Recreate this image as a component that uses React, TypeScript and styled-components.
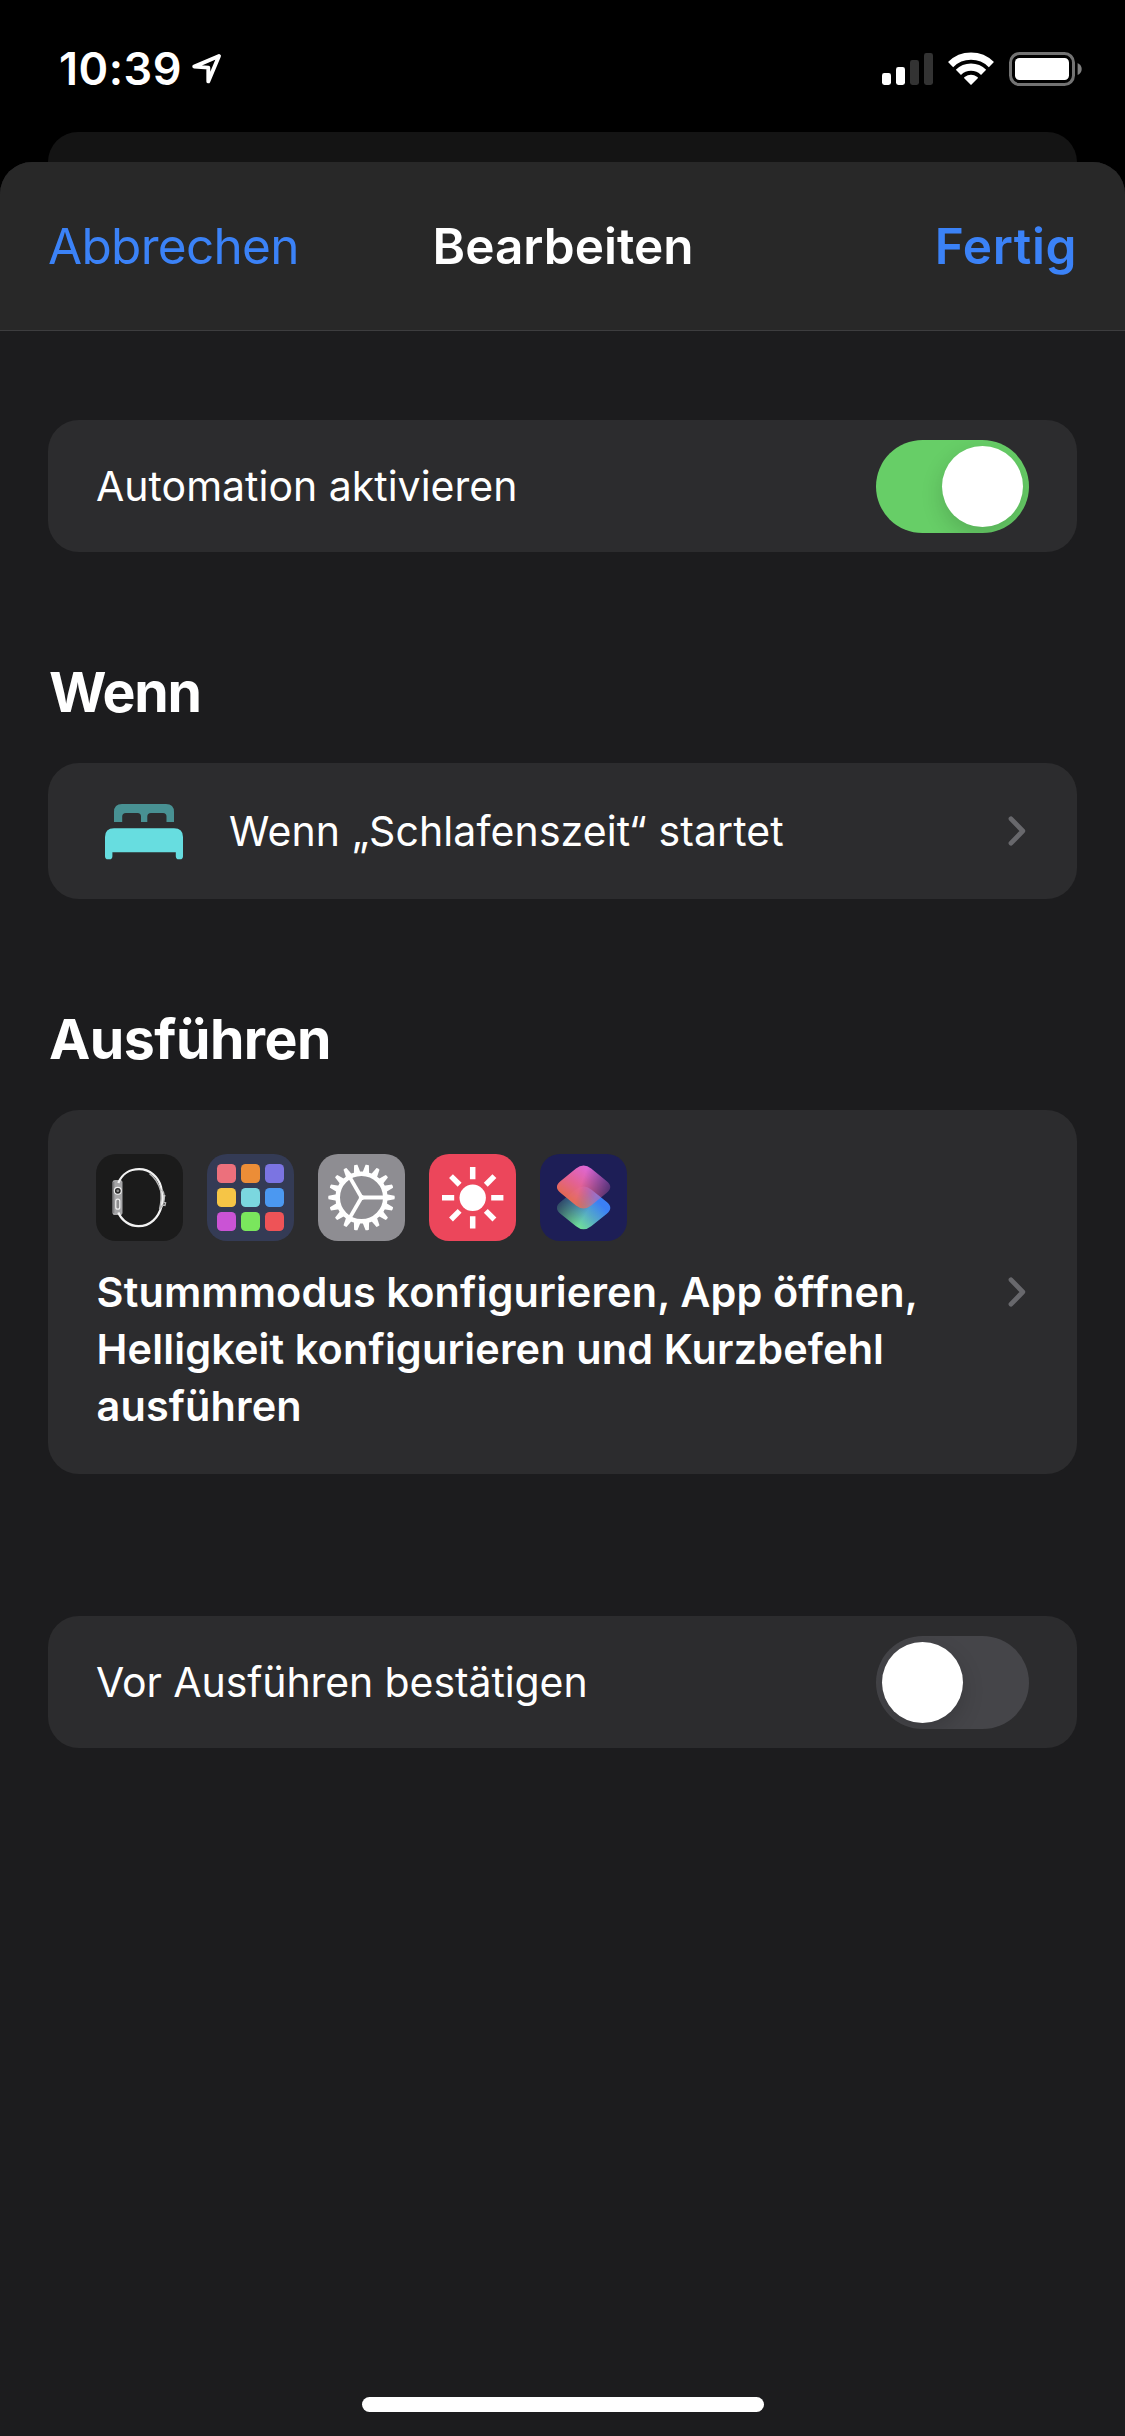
import React, { useState } from 'react';
import styled, { createGlobalStyle } from 'styled-components';

const GlobalStyle = createGlobalStyle`
  *, *::before, *::after { box-sizing: border-box; }
  body {
    margin: 0;
    background: #000;
    color: #fff;
    font-family: Inter, "Liberation Sans", sans-serif;
  }
  button {
    border: 0;
    padding: 0;
    background: none;
    color: inherit;
    font: inherit;
  }
  svg { display: block; flex: none; }
`;

const Screen = styled.div`
  width: 1125px;
  height: 2436px;
  display: flex;
  flex-direction: column;
  background: #000;
  overflow: hidden;
`;

const StatusBar = styled.div`
  height: 132px;
  flex: none;
  padding: 6px 43px 0 59px;
  display: flex;
  align-items: center;
  justify-content: space-between;
`;

const TimeGroup = styled.div`
  display: flex;
  align-items: center;
  gap: 9px;
`;

const Time = styled.span`
  font-size: 45px;
  font-weight: 600;
  line-height: 54px;
  letter-spacing: 0.5px;
`;

const StatusIcons = styled.div`
  display: flex;
  align-items: center;
  gap: 15px;
`;

const BackCard = styled.div`
  height: 30px;
  flex: none;
  margin: 0 48px;
  border-radius: 30px 30px 0 0;
  background: #141414;
`;

const Sheet = styled.main`
  flex: 1;
  display: flex;
  flex-direction: column;
  border-radius: 32px 32px 0 0;
  background: #1c1c1e;
  overflow: hidden;
`;

const NavBar = styled.header`
  height: 169px;
  flex: none;
  padding: 0 48px 0 48px;
  display: grid;
  grid-template-columns: 1fr auto 1fr;
  align-items: center;
  background: #282828;
  border-bottom: 1px solid #3d3d3f;
  font-size: 49.5px;
  line-height: 60px;
`;

const NavButton = styled.button<{ $strong?: boolean }>`
  justify-self: ${(p) => (p.$strong ? 'end' : 'start')};
  color: #3b82f7;
  font-weight: ${(p) => (p.$strong ? 600 : 400)};
  letter-spacing: ${(p) => (p.$strong ? '0.6px' : '-0.7px')};
`;

const NavTitle = styled.h1`
  margin: 0;
  padding-left: 1px;
  font-size: inherit;
  font-weight: 600;
`;

const Content = styled.div`
  flex: 1;
  display: flex;
  flex-direction: column;
  padding: 89px 48px 0;
`;

const Section = styled.section<{ $gap?: number }>`
  display: flex;
  flex-direction: column;
  margin-top: ${(p) => p.$gap ?? 0}px;
`;

const SectionTitle = styled.h2<{ $spacing?: number }>`
  margin: 0 0 41px 1px;
  font-size: 55.4px;
  font-weight: 700;
  line-height: 60px;
  letter-spacing: ${(p) => p.$spacing ?? 0}px;
`;

const Card = styled.div<{ $height: number }>`
  height: ${(p) => p.$height}px;
  padding: 0 48px;
  display: flex;
  align-items: center;
  border-radius: 31px;
  background: #2c2c2e;
`;

const CardLabel = styled.span<{ $spacing?: number }>`
  flex: 1;
  font-size: 41px;
  line-height: 57px;
  letter-spacing: ${(p) => p.$spacing ?? 0}px;
`;

const TriggerIcon = styled.div`
  width: 133px;
  padding: 2px 0 0 9px;
`;

const ActionsCard = styled.div`
  height: 364px;
  padding: 44px 48px 0;
  display: flex;
  flex-direction: column;
  gap: 23px;
  border-radius: 31px;
  background: #2c2c2e;
`;

const AppIcons = styled.div`
  display: flex;
  gap: 24px;
`;

const AppIcon = styled.div<{ $bg: string }>`
  width: 87px;
  height: 87px;
  border-radius: 20px;
  background: ${(p) => p.$bg};
  overflow: hidden;
`;

const SummaryRow = styled.div`
  display: flex;
  align-items: flex-start;
  justify-content: space-between;
`;

const Summary = styled.p`
  width: 860px;
  margin: 0;
  padding-left: 0.6px;
  font-size: 41.4px;
  font-weight: 600;
  line-height: 57px;
  letter-spacing: 0.14px;
`;

const ChevronSlot = styled.span<{ $height: number }>`
  height: ${(p) => p.$height}px;
  display: flex;
  align-items: center;
  margin-right: 3px;
`;

const Track = styled.button<{ $on: boolean }>`
  width: 153px;
  height: 93px;
  padding: 6px;
  display: flex;
  justify-content: ${(p) => (p.$on ? 'flex-end' : 'flex-start')};
  border-radius: 47px;
  background: ${(p) => (p.$on ? '#67ce67' : '#454549')};
  overflow: hidden;
`;

const Knob = styled.span`
  width: 81px;
  height: 81px;
  border-radius: 50%;
  background: #fff;
  box-shadow: 0 8px 22px rgba(0, 0, 0, 0.16);
`;

const HomeIndicator = styled.div`
  width: 402px;
  height: 15px;
  flex: none;
  margin: 0 auto 24px 362px;
  border-radius: 8px;
  background: #fff;
`;

function Toggle({ initial, label }: { initial: boolean; label: string }) {
  const [on, setOn] = useState(initial);
  return (
    <Track $on={on} role="switch" aria-checked={on} aria-label={label} onClick={() => setOn(!on)}>
      <Knob />
    </Track>
  );
}

const LocationArrow = () => (
  <svg width="32" height="34" viewBox="191 52 32 34" fill="none" stroke="#fff" strokeWidth="3.9" strokeLinejoin="round">
    <path d="M219 56 L194.2 66.6 L208.3 67.6 L208.3 81.4 Z" />
  </svg>
);

const Signal = () => (
  <svg width="51" height="34" viewBox="0 0 51 34" fill="#fff">
    <rect x="0" y="21" width="9" height="12" rx="2.4" />
    <rect x="14" y="15" width="9" height="18" rx="2.4" />
    <rect x="28" y="8" width="9" height="25" rx="2.4" fill="#333" />
    <rect x="42" y="1" width="9" height="32" rx="2.4" fill="#333" />
  </svg>
);

const Wifi = () => (
  <svg width="46" height="34" viewBox="0 0 46 34">
    <g fill="none" stroke="#fff" strokeWidth="7.3">
      <path d="M2.6 12.6 A29 29 0 0 1 43.4 12.6" />
      <path d="M10.4 20.4 A17.9 17.9 0 0 1 35.6 20.4" />
    </g>
    <path d="M23 33 L16 26 Q16 25.4 16.6 25 Q23 20.6 29.4 25 Q30 25.4 30 26 Z" fill="#fff" />
  </svg>
);

const Battery = () => (
  <svg width="73" height="34" viewBox="0 0 73 34">
    <rect x="1.5" y="1.5" width="63" height="31" rx="9" fill="none" stroke="#737373" strokeWidth="3" />
    <rect x="6" y="6" width="54" height="22" rx="4.5" fill="#fff" />
    <path d="M68.6 11 Q72.7 13 72.7 17 Q72.7 21 68.6 23 Z" fill="#808080" />
  </svg>
);

const Chevron = () => (
  <svg width="18" height="30" viewBox="0 0 18 30" fill="none" stroke="#68686c" strokeWidth="4.8" strokeLinecap="round" strokeLinejoin="round">
    <path d="M3 2.8 L14.8 15 L3 27.2" />
  </svg>
);

const BedIcon = () => (
  <svg width="78" height="56" viewBox="0 0 78 56">
    <path
      fill="#489193"
      d="M9 18 V8 Q9 0 17 0 H61 Q69 0 69 8 V18 H61.5 V12.5 Q61.5 9 58 9 H46 Q42.3 9 42.3 12.5 V18 H36 V12.5 Q36 9 32.5 9 H21 Q17.2 9 17.2 12.5 V18 Z"
    />
    <path
      fill="#67dde0"
      d="M0 33 Q0 24.2 9 24.2 H69 Q78 24.2 78 33 V52.2 Q78 55.3 75 55.3 H73.8 Q70.8 55.3 70.8 52.2 V48.2 H7.4 V52.2 Q7.4 55.3 4.4 55.3 H3 Q0 55.3 0 52.2 Z"
    />
  </svg>
);

const WatchIcon = () => (
  <svg width="87" height="87" viewBox="0 0 87 87" fill="none">
    <rect x="16.5" y="26" width="10" height="35" rx="2.6" fill="#a5a5a7" />
    <path d="M17.6 28 V59" stroke="#828284" strokeWidth="1.6" />
    <path d="M22.3 29 C26 20 34 15.2 43 15.2 C54 15.2 62.5 23 65 33 C66.6 40 67 47 65.2 53" stroke="#f2f2f2" strokeWidth="2.3" />
    <path d="M22.3 58.5 C26 67 34 72.2 42.5 72.2 C54 72.2 62.5 64 65.6 52 L68.4 41" stroke="#f2f2f2" strokeWidth="2.3" />
    <path d="M53.5 19.6 C58.5 23.2 62.6 29.5 64.8 37" stroke="#b8b8b8" strokeWidth="1.3" />
    <path d="M65.8 35.5 C68.3 38.5 68.6 44 67.8 48.5 L69.6 48.8 L69 51.4 L66.8 51 L63.5 55 C65 49 65.6 42 64.4 35" stroke="#b8b8b8" strokeWidth="1.3" />
    <circle cx="21.8" cy="36.8" r="4" fill="#f0f0f0" />
    <circle cx="21.8" cy="36.8" r="2.9" fill="#2a2a2a" />
    <circle cx="21.8" cy="36.8" r="1.4" fill="#8d8d8d" />
    <rect x="19.8" y="45.2" width="4" height="10" rx="2" fill="#8d8d8f" stroke="#f0f0f0" strokeWidth="1.2" />
  </svg>
);

const TILE_COLORS = ['#ec707c', '#ec8d37', '#7b74e2', '#f6c546', '#7bd7df', '#4b98f1', '#ca53d5', '#7ae65d', '#ee5357'];

const TileGrid = styled.div`
  width: 87px;
  height: 87px;
  display: grid;
  grid-template-columns: repeat(3, 18.4px);
  grid-auto-rows: 18.4px;
  gap: 5.7px;
  place-content: center;
`;

const Tile = styled.span<{ $color: string }>`
  border-radius: 4.6px;
  background: ${(p) => p.$color};
`;

const GearIcon = () => (
  <svg width="87" height="87" viewBox="-43.5 -43.5 87 87" fill="#fff">
    <circle r="23.8" fill="none" stroke="#fff" strokeWidth="4.6" />
    {Array.from({ length: 18 }, (_, i) => (
      <path key={i} d="M25 -3.3 L33 -1.7 Q33.6 0 33 1.7 L25 3.3 Z" transform={`rotate(${i * 20})`} />
    ))}
    <g stroke="#fff" strokeWidth="3.8">
      {[0, 120, 240].map((a) => (
        <path key={a} d="M0 0 H23" transform={`rotate(${a})`} />
      ))}
    </g>
    <circle r="2.6" />
  </svg>
);

const SunIcon = () => (
  <svg width="87" height="87" viewBox="-43.7 -43.8 87 87">
    <circle r="13.2" fill="#fff" />
    <g stroke="#fff" strokeWidth="5.5">
      {Array.from({ length: 8 }, (_, i) => (
        <path key={i} d="M18.5 0 H30.7" transform={`rotate(${i * 45})`} />
      ))}
    </g>
  </svg>
);

const DIAMOND = 'M-7.6 -18.4 Q0 -24.5 7.6 -18.4 L22.9 -6.1 Q30.5 0 22.9 6.1 L7.6 18.4 Q0 24.5 -7.6 18.4 L-22.9 6.1 Q-30.5 0 -22.9 -6.1 Z';

const ShortcutsIcon = () => (
  <svg width="87" height="87" viewBox="0 0 87 87">
    <defs>
      <linearGradient id="warm" gradientUnits="userSpaceOnUse" x1="4" y1="-19" x2="-16" y2="9">
        <stop offset="0" stopColor="#e96bdb" />
        <stop offset="0.55" stopColor="#ee6698" />
        <stop offset="1" stopColor="#ee6c5a" />
      </linearGradient>
      <linearGradient id="warmFade" gradientUnits="userSpaceOnUse" x1="-2" y1="-4" x2="26" y2="6">
        <stop offset="0" stopColor="#fff" stopOpacity="0.95" />
        <stop offset="1" stopColor="#fff" stopOpacity="0.25" />
      </linearGradient>
      <mask id="warmMask" maskUnits="userSpaceOnUse" x="-30" y="-30" width="60" height="60">
        <rect x="-30" y="-30" width="60" height="60" fill="url(#warmFade)" />
      </mask>
      <linearGradient id="cool" gradientUnits="userSpaceOnUse" x1="-4" y1="19" x2="18" y2="-3">
        <stop offset="0" stopColor="#6fdd9b" />
        <stop offset="0.5" stopColor="#55a9c8" />
        <stop offset="1" stopColor="#3b7ff6" />
      </linearGradient>
      <linearGradient id="coolFade" gradientUnits="userSpaceOnUse" x1="-22" y1="-8" x2="2" y2="6">
        <stop offset="0" stopColor="#fff" stopOpacity="0.25" />
        <stop offset="1" stopColor="#fff" stopOpacity="1" />
      </linearGradient>
      <mask id="coolMask" maskUnits="userSpaceOnUse" x="-30" y="-30" width="60" height="60">
        <rect x="-30" y="-30" width="60" height="60" fill="url(#coolFade)" />
      </mask>
    </defs>
    <g transform="translate(43.6 53.9)">
      <path d={DIAMOND} fill="url(#cool)" mask="url(#coolMask)" />
    </g>
    <g transform="translate(43.6 33)">
      <path d={DIAMOND} fill="url(#warm)" mask="url(#warmMask)" />
    </g>
  </svg>
);

export default function App() {
  return (
    <>
      <GlobalStyle />
      <Screen>
        <StatusBar>
          <TimeGroup>
            <Time>10:39</Time>
            <LocationArrow />
          </TimeGroup>
          <StatusIcons>
            <Signal />
            <Wifi />
            <Battery />
          </StatusIcons>
        </StatusBar>
        <BackCard />
        <Sheet>
          <NavBar>
            <NavButton>Abbrechen</NavButton>
            <NavTitle>Bearbeiten</NavTitle>
            <NavButton $strong>Fertig</NavButton>
          </NavBar>
          <Content>
            <Section>
              <Card $height={132}>
                <CardLabel>Automation aktivieren</CardLabel>
                <Toggle initial label="Automation aktivieren" />
              </Card>
            </Section>
            <Section $gap={110}>
              <SectionTitle $spacing={-1.2}>Wenn</SectionTitle>
              <Card $height={136}>
                <TriggerIcon>
                  <BedIcon />
                </TriggerIcon>
                <CardLabel $spacing={0.1}>Wenn „Schlafenszeit“ startet</CardLabel>
                <ChevronSlot $height={57}>
                  <Chevron />
                </ChevronSlot>
              </Card>
            </Section>
            <Section $gap={110}>
              <SectionTitle $spacing={-0.5}>Ausführen</SectionTitle>
              <ActionsCard>
                <AppIcons>
                  <AppIcon $bg="#1b1b1b"><WatchIcon /></AppIcon>
                  <AppIcon $bg="#343b55">
                    <TileGrid>
                      {TILE_COLORS.map((c) => <Tile key={c} $color={c} />)}
                    </TileGrid>
                  </AppIcon>
                  <AppIcon $bg="#8e8d92"><GearIcon /></AppIcon>
                  <AppIcon $bg="#ec465b"><SunIcon /></AppIcon>
                  <AppIcon $bg="#1d1e56"><ShortcutsIcon /></AppIcon>
                </AppIcons>
                <SummaryRow>
                  <Summary>Stummmodus konfigurieren, App öffnen, Helligkeit konfigurieren und Kurzbefehl ausführen</Summary>
                  <ChevronSlot $height={55}>
                    <Chevron />
                  </ChevronSlot>
                </SummaryRow>
              </ActionsCard>
            </Section>
            <Section $gap={142}>
              <Card $height={132}>
                <CardLabel $spacing={-0.1}>Vor Ausführen bestätigen</CardLabel>
                <Toggle initial={false} label="Vor Ausführen bestätigen" />
              </Card>
            </Section>
          </Content>
          <HomeIndicator />
        </Sheet>
      </Screen>
    </>
  );
}
